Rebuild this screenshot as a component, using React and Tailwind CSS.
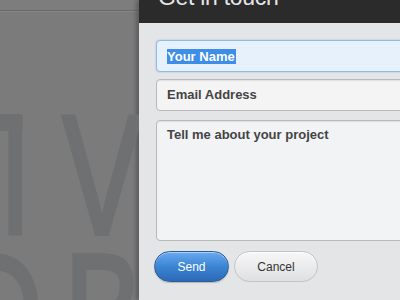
import React from "react";

const fieldBase =
  "w-full rounded-[4px] border text-[13px] font-bold text-[#444] outline-none";

export default function App() {
  return (
    <div className="w-[400px] h-[300px] overflow-hidden flex font-['Liberation_Sans',Arial,sans-serif]">
      {/* page behind the overlay */}
      <div className="w-[139px] shrink-0 h-full bg-[#7b7b7b] overflow-hidden flex flex-col">
        <div className="h-[11px] shrink-0 bg-[#7d7d7d] border-b border-[#6a6a6a]" />
        <div className="h-px shrink-0 bg-[#858585]" />
        <div className="flex-1 overflow-hidden">
          <div className="mt-[94px] text-[170px] leading-[139px] text-[#6e7072] [-webkit-text-stroke:4px_#6e7072] whitespace-nowrap">
            <div className="ml-[-21px] origin-left scale-x-[0.7] flex">
              <span className="w-[62px] shrink-0 overflow-hidden">T</span>
              <span className="ml-[57px] shrink-0">V</span>
            </div>
            <div className="ml-[-43px] origin-left scale-x-[0.7]">
              <span className="mr-[30px]">D</span>
              <span>B</span>
            </div>
          </div>
        </div>
      </div>

      {/* modal */}
      <div className="flex-1 h-full flex flex-col bg-[#e4e5e7] shadow-[-3px_0_4px_rgba(0,0,0,0.25)]">
        <div className="h-[23px] shrink-0 bg-[#2b2b2b] overflow-hidden pl-[19px]">
          <div className="mt-[-17px] text-[23px] leading-[29px] text-[#e6e6e6] tracking-[-0.3px] whitespace-nowrap">
            Get in touch
          </div>
        </div>

        <div className="flex-1 pl-[17px] pt-[17px] flex flex-col">
          <div className="mr-[-20px] flex flex-col">
            <div
              className={`${fieldBase} h-[32px] bg-[#e7f1fc] border-[#8fbbe9] shadow-[0_0_2px_rgba(90,150,220,0.5)] pl-[10px] flex items-center`}
            >
              <span className="bg-[#3d8ee8] text-white leading-[15px] pr-[1px]">Your Name</span>
            </div>
            <div
              className={`${fieldBase} mt-[7px] h-[32px] bg-[#f4f4f5] border-[#b9b9bb] shadow-[inset_0_1px_1px_rgba(0,0,0,0.08)] pl-[10px] flex items-center`}
            >
              Email Address
            </div>
            <div
              className={`${fieldBase} mt-[9px] h-[121px] bg-[#f2f3f5] border-[#b9b9bb] shadow-[inset_0_1px_1px_rgba(0,0,0,0.08)] pl-[10px] pt-[6px] text-[12.5px] leading-[15px]`}
            >
              Tell me about your project
            </div>
          </div>

          <div className="flex gap-[5px] mt-[10px] ml-[-2px]">
            <button className="w-[75px] h-[31px] rounded-full border border-[#2a5d97] bg-gradient-to-b from-[#6aaaf0] via-[#3c84d4] to-[#2c6ab5] text-white text-[12px] shadow-[inset_0_1px_0_rgba(255,255,255,0.45),0_1px_1px_rgba(0,0,0,0.2)]">
              Send
            </button>
            <button className="w-[84px] h-[31px] rounded-full border border-[#c3c4c6] bg-gradient-to-b from-[#f7f7f8] to-[#dfe0e2] text-[#333] text-[12px] shadow-[inset_0_1px_0_rgba(255,255,255,0.9)]">
              Cancel
            </button>
          </div>
        </div>
      </div>
    </div>
  );
}
